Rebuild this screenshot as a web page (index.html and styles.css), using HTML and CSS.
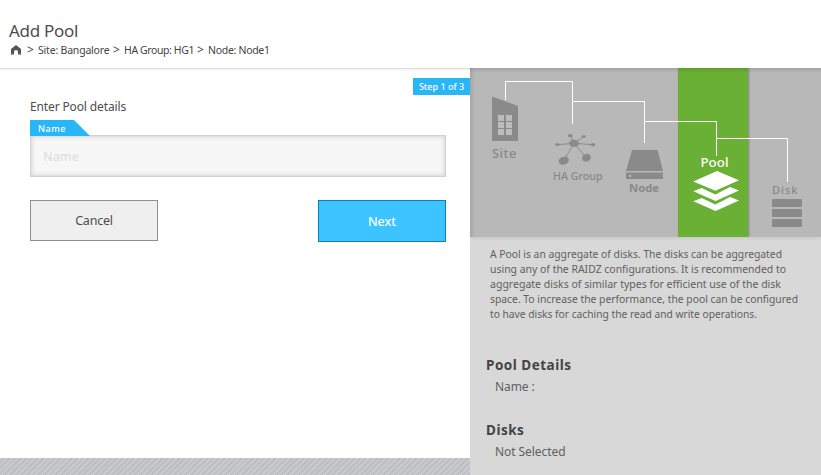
FILE: index.html
```html
<!DOCTYPE html>
<html lang="en">
<head>
<meta charset="utf-8">
<title>Add Pool</title>
<link rel="stylesheet" href="styles.css">
</head>
<body>
<header class="header">
  <h1>Add Pool</h1>
  <nav class="crumbs">
    <svg class="home" width="10" height="10" viewBox="0 0 10 10"><path d="M5 0L0 4V9.5H3V6.6Q3 5 5 5T7 6.6V9.5H10V4z"/></svg>
    <span class="sep">&gt;</span><span class="site">Site: Bangalore</span>
    <span class="sep">&gt;</span><span class="group">HA Group: HG1</span>
    <span class="sep">&gt;</span><span class="node">Node: Node1</span>
  </nav>
</header>
<main class="layout">
  <section class="form">
    <span class="step">Step 1 of 3</span>
    <p class="intro">Enter Pool details</p>
    <label class="tab" for="name">Name</label>
    <input class="field" id="name" type="text" placeholder="Name">
    <div class="actions">
      <button class="btn cancel">Cancel</button>
      <button class="btn next">Next</button>
    </div>
    <div class="stripes"></div>
  </section>
  <aside class="side">
    <div class="diagram">
      <svg width="351" height="169" viewBox="0 0 351 169">
        <rect class="active" x="208" y="0" width="70" height="169"/>
        <g class="lines">
          <path d="M35.5 32V13.5H102.5V56M102.5 33.5H174.5V75M174.5 53.5H246.5V88M246.5 70.5H317.5V114"/>
        </g>
        <g class="icon">
          <path d="M22 28.5L48 38V73H22z"/>
          <path class="pane" d="M28 47h6v6h-6zM36 47h6v6h-6zM28 54h6v6h-6zM36 54h6v6h-6zM28 61h6v6h-6zM36 61h6v6h-6z"/>
          <path class="spokes" d="M104 75.3L100.3 67.7M104 75.3L113.7 68.7M104 75.3L87.3 76.7M104 75.3L123 76.7M104 75.3L93.7 92.7M104 75.3L116.3 89.7"/>
          <ellipse cx="104" cy="75.3" rx="5" ry="3.6"/>
          <ellipse cx="100.3" cy="67.7" rx="2.4" ry="1.6"/>
          <ellipse cx="113.7" cy="68.6" rx="2.2" ry="1.4"/>
          <ellipse cx="87.3" cy="76.6" rx="2.3" ry="1.4"/>
          <ellipse cx="123" cy="76.7" rx="2.3" ry="1.6"/>
          <ellipse cx="93.7" cy="92.7" rx="5.2" ry="4" transform="rotate(-20 93.7 92.7)"/>
          <ellipse cx="116.4" cy="89.7" rx="4.5" ry="3.8" transform="rotate(-20 116.4 89.7)"/>
          <path d="M162 82H187.6L193 103H156zM156 104.4H193V111H156z"/>
          <rect class="pane" x="159" y="107" width="2" height="2"/>
          <rect x="302" y="131" width="30" height="8" rx="1"/>
          <rect x="302" y="141" width="30" height="8" rx="1"/>
          <rect x="302" y="151" width="30" height="8" rx="1"/>
        </g>
        <path class="stack" d="M247 103L269 112.2L245.4 122.7L223.3 113.4zM223.3 123.3L231.7 120L245.3 126.6L260 119L269 122.4L245.6 133zM223.3 133.3L231.7 130L245.3 136.6L260 129L269 132.4L245.6 143z"/>
        <g class="labels">
          <text class="large" x="22" y="90" textLength="24.5">Site</text>
          <text x="83" y="112" textLength="49.5" lengthAdjust="spacingAndGlyphs">HA Group</text>
          <text class="bold" x="159" y="124" textLength="30" lengthAdjust="spacingAndGlyphs">Node</text>
          <text class="current" x="230.5" y="98.6" textLength="28" lengthAdjust="spacingAndGlyphs">Pool</text>
          <text x="302" y="126" textLength="25.5">Disk</text>
        </g>
      </svg>
    </div>
    <svg class="about" width="331" height="84">
      <text y="15" textLength="292" lengthAdjust="spacingAndGlyphs">A Pool is an aggregate of disks. The disks can be aggregated</text>
      <text y="30" textLength="296" lengthAdjust="spacingAndGlyphs">using any of the RAIDZ configurations. It is recommended to</text>
      <text y="45" textLength="291" lengthAdjust="spacingAndGlyphs">aggregate disks of similar types for efficient use of the disk</text>
      <text y="60" textLength="308" lengthAdjust="spacingAndGlyphs">space. To increase the performance, the pool can be configured</text>
      <text y="75" textLength="267" lengthAdjust="spacingAndGlyphs">to have disks for caching the read and write operations.</text>
    </svg>
    <section class="summary">
      <h2>Pool Details</h2>
      <p>Name :</p>
    </section>
    <section class="summary">
      <h2>Disks</h2>
      <p>Not Selected</p>
    </section>
  </aside>
</main>
</body>
</html>
```
FILE: styles.css
```css
* { box-sizing: border-box; }
body {
  margin: 0;
  width: 821px;
  height: 475px;
  overflow: hidden;
  display: flex;
  flex-direction: column;
  background: #fff;
  color: #4d4d4d;
  font-family: "Noto Sans", "Open Sans", sans-serif;
}
h1, h2, p { margin: 0; font-weight: 400; }
svg { display: block; flex: none; }

.header { height: 68px; padding: 20px 0 0 9px; flex: none; }
h1 { height: 22px; font-size: 17px; line-height: 22px; letter-spacing: -.3px; }
.crumbs {
  display: flex;
  align-items: flex-start;
  color: #444;
  font-size: 10.5px;
  line-height: 16px;
  white-space: nowrap;
}
.home { margin: 3px 6px 0 2px; fill: #555; }
.sep { width: 11px; font-size: 12px; }
.site { width: 75px; letter-spacing: -.2px; }
.group { width: 73px; letter-spacing: -.4px; }
.node { letter-spacing: -.3px; }

.layout { flex: 1; display: flex; min-height: 0; }
.form {
  width: 470px;
  padding: 10px 0 0 30px;
  display: flex;
  flex-direction: column;
  align-items: flex-start;
  background: linear-gradient(#dedede 0 1px, #f3f3f3 1px 2px, #fff 3px);
}
.step {
  align-self: flex-end;
  width: 57px;
  height: 17px;
  background: #29b6f6;
  color: #fff;
  font-size: 9px;
  font-weight: 500;
  line-height: 17px;
  text-align: center;
  white-space: nowrap;
}
.intro { height: 25px; line-height: 23px; font-size: 12px; letter-spacing: -.13px; }
.tab {
  position: relative;
  width: 60px;
  height: 16px;
  padding-left: 8px;
  background: #29b6f6;
  clip-path: polygon(0 0, 44px 0, 100% 100%, 0 100%);
  color: #fff;
  font-size: 9px;
  font-weight: 500;
  letter-spacing: .5px;
  line-height: 17px;
}
.field {
  width: 416px;
  height: 42px;
  margin-top: -1px;
  padding: 0 12px;
  border: 1px solid #d2d2d2;
  background: #f7f7f7;
  box-shadow: inset 0 0 5px #c8c8c8;
  font: 12.5px "Noto Sans", sans-serif;
}
.field::placeholder { color: #e0e0e0; opacity: 1; font-weight: 500; }
.actions { width: 416px; margin-top: 23px; display: flex; justify-content: space-between; }
.btn { width: 128px; padding: 0; font: 12.5px "Noto Sans", sans-serif; }
.cancel { height: 41px; border: 1px solid #8f8f8f; background: #efefef; color: #4d4d4d; letter-spacing: -.2px; }
.next { height: 42px; border: 1px solid #0b82b5; background: #3dc3ff; color: #fff; font-weight: 500; font-size: 12.5px; }
.stripes {
  width: 470px;
  height: 17px;
  margin: auto 0 0 -30px;
  background: repeating-linear-gradient(135deg, #c7cbcd 0 2px, #bbbfc2 2px 4px);
}

.side { width: 351px; background: #d8d8d8; color: #606060; }
.diagram {
  height: 169px;
  position: relative;
  background: #b8b8b8;
  box-shadow: 0 1px 4px #c4c4c4;
  clip-path: inset(0 0 -8px 0);
}
.diagram::after {
  content: "";
  position: absolute;
  inset: 0;
  background:
    linear-gradient(rgba(0, 0, 0, .11), transparent 5px),
    linear-gradient(90deg, rgba(0, 0, 0, .1), transparent 5px);
}
.active { fill: #69b035; filter: drop-shadow(1px 0 1px rgba(0, 0, 0, .3)); }
.lines { fill: none; stroke: #fff; }
.icon { fill: #8a8a8a; }
.pane { fill: #bcbcbc; }
.spokes { stroke: #8a8a8a; }
.stack { fill: #fff; }
.labels { fill: #888; font-size: 11px; font-weight: 500; }
.large { font-size: 13px; }
.bold { font-weight: 700; }
.current { fill: #fff; font-size: 12px; font-weight: 500; }
.about { margin: 6px 0 0 20px; fill: currentColor; font-size: 11px; }
.summary { height: 65px; padding: 28px 0 0 16px; }
.summary h2 { height: 21px; line-height: 20px; color: #444; font-size: 13.5px; font-weight: 700; letter-spacing: .5px; }
.summary p { padding-left: 9px; line-height: 22px; font-size: 12px; letter-spacing: -.07px; }
```
